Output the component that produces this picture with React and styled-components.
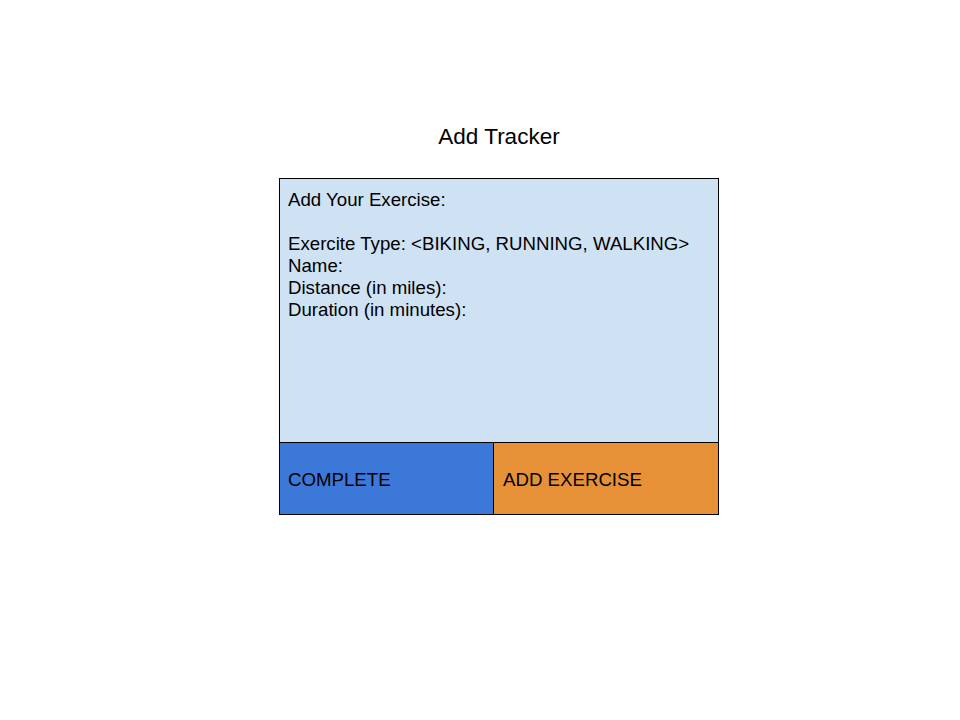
import React from "react";
import styled, { createGlobalStyle } from "styled-components";

const Global = createGlobalStyle`
  html, body { margin: 0; padding: 0; background: #ffffff; }
  body { font-family: "Liberation Sans", Arial, sans-serif; color: #000; }
`;

const Page = styled.div`
  width: 960px;
  height: 720px;
  box-sizing: border-box;
  padding: 124px 0 0 279px;
`;

const Stack = styled.div`
  width: 440px;
  display: flex;
  flex-direction: column;
`;

const Title = styled.h1`
  margin: 0 0 28px;
  font-size: 22.5px;
  line-height: 26px;
  font-weight: 400;
  text-align: center;
`;

const Card = styled.div`
  border: 1px solid #000;
  display: flex;
  flex-direction: column;
`;

const Form = styled.div`
  height: 264px;
  box-sizing: border-box;
  background: #cfe2f3;
  padding: 10px 8px;
  font-size: 18.67px;
  line-height: 22px;
  border-bottom: 1px solid #000;
`;

const Line = styled.div`
  min-height: 22px;
  white-space: nowrap;
`;

const Actions = styled.div`
  display: grid;
  grid-template-columns: 213px 1fr;
  height: 71px;
`;

const Action = styled.div`
  display: flex;
  align-items: center;
  box-sizing: border-box;
  padding: 2px 0 0 ${(p) => (p.$divider ? "9px" : "8px")};
  font-size: 18.67px;
  background: ${(p) => p.$color};
  border-left: ${(p) => (p.$divider ? "1px solid #000" : "none")};
`;

export default function App() {
  return (
    <>
      <Global />
      <Page>
        <Stack>
          <Title>Add Tracker</Title>
          <Card>
            <Form>
              <Line>Add Your Exercise:</Line>
              <Line />
              <Line>Exercite Type: &lt;BIKING, RUNNING, WALKING&gt;</Line>
              <Line>Name:</Line>
              <Line>Distance (in miles):</Line>
              <Line>Duration (in minutes):</Line>
            </Form>
            <Actions>
              <Action $color="#3c78d8">COMPLETE</Action>
              <Action $color="#e69138" $divider>ADD EXERCISE</Action>
            </Actions>
          </Card>
        </Stack>
      </Page>
    </>
  );
}
